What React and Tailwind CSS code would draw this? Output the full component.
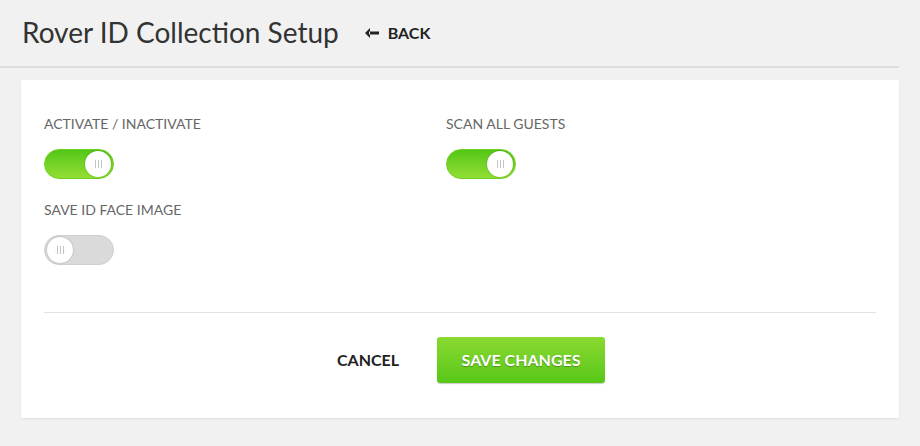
import React from "react";

function Toggle({ on }) {
  return (
    <div
      className={
        "relative h-[30px] w-[70px] rounded-full border " +
        (on
          ? "border-[#6fd024] bg-gradient-to-b from-[#52c716] to-[#92de32]"
          : "border-[#cfcfcf] bg-[#dadada]")
      }
    >
      <div
        className={
          "absolute top-[1px] flex h-[26px] w-[26px] items-center justify-center gap-[2px] rounded-full bg-white shadow-[0_0_2px_rgba(0,0,0,0.25)] " +
          (on ? "right-[2px]" : "left-[2px]")
        }
      >
        <span className="h-[8px] w-px bg-[#c4c4c4]" />
        <span className="h-[8px] w-px bg-[#c4c4c4]" />
        <span className="h-[8px] w-px bg-[#c4c4c4]" />
      </div>
    </div>
  );
}

function Field({ label, on }) {
  return (
    <div className="flex flex-col">
      <div className="h-[18px] text-[14px] leading-[18px] text-[#666]">{label}</div>
      <div className="mt-[16px]">
        <Toggle on={on} />
      </div>
    </div>
  );
}

export default function App() {
  return (
    <div
      className="h-[446px] w-[920px] overflow-hidden bg-[#f1f1f1]"
      style={{ fontFamily: "Lato, 'Open Sans', sans-serif" }}
    >
      <div className="flex h-[68px] w-[899px] items-center gap-[26px] border-b-2 border-[#dedede] pl-[22px]">
        <h1 className="pb-[2px] text-[28px] font-normal leading-none text-[#333]">
          Rover ID Collection Setup
        </h1>
        <div className="flex items-center gap-[9px] text-[16px] font-bold text-[#222]">
          <svg width="14" height="10" viewBox="0 0 14 10">
            <path d="M5 0 L0 5 L5 10 Z M4 3.5 H14 V6.5 H4 Z" fill="#222" />
          </svg>
          <span>BACK</span>
        </div>
      </div>
      <div className="ml-[21px] mt-[12px] h-[338px] w-[878px] bg-white px-[23px] pt-[35px] shadow-[0_1px_2px_rgba(0,0,0,0.08)]">
        <div className="grid gap-y-[22px]" style={{ gridTemplateColumns: "402px 1fr" }}>
          <Field label="ACTIVATE / INACTIVATE" on />
          <Field label="SCAN ALL GUESTS" on />
          <Field label="SAVE ID FACE IMAGE" on={false} />
        </div>
        <div className="mt-[47px] border-t border-[#e3e3e3]" />
        <div className="mt-[24px] flex items-center justify-center gap-[38px] pl-[22px]">
          <button className="text-[16px] font-bold text-[#222]">CANCEL</button>
          <button className="h-[46px] w-[168px] rounded-[3px] bg-gradient-to-b from-[#8ad930] to-[#56c718] text-[16px] font-bold text-white shadow-[0_1px_1px_rgba(0,0,0,0.2)] [text-shadow:0_1px_1px_rgba(0,0,0,0.3)]">
            SAVE CHANGES
          </button>
        </div>
      </div>
    </div>
  );
}
